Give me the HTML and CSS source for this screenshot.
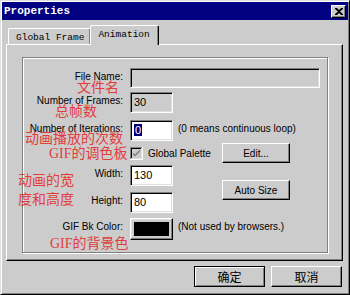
FILE: index.html
```html
<!DOCTYPE html>
<html lang="zh-CN">
<head>
  <meta charset="UTF-8">
  <title>Properties</title>
  <link rel="stylesheet" href="styles.css">
</head>
<body>
  <div class="window">
    <div class="titlebar">
      <span class="title">Properties</span>
      <span class="close">
        <svg width="8" height="7" viewBox="0 0 8 7"><path d="M0 0h2l2 2 2-2h2v1L5 3.5 8 6v1H6L4 5 2 7H0V6l3-2.5L0 1z" fill="#000"/></svg>
      </span>
    </div>
    <div class="main">
      <div class="tabs">
        <div class="tab">Global Frame</div>
        <div class="tab active">Animation</div>
      </div>
      <div class="panel">
        <div class="group">
          <div class="label">File Name:</div>
          <div class="field wide off"></div>

          <div class="label">Number of Frames:</div>
          <div class="field off frames">30</div>

          <div class="label">Number of Iterations:</div>
          <div class="field"><span class="sel">0</span></div>
          <div class="note">(0 means continuous loop)</div>

          <div class="check-row">
            <span class="check">
              <svg width="13" height="13" viewBox="0 0 13 13">
                <path d="M0 0h12v1H1v11H0z" fill="#808080"/>
                <path d="M1 1h10v1H2v9H1z" fill="#000"/>
                <path d="M12 0h1v13H0v-1h12z" fill="#fff"/>
                <path d="M11 1h1v11H1v-1h10z" fill="#dfdfdf"/>
                <path d="M3 5.5l2 2 5-5v2l-5 5-2-2z" fill="#808080"/>
              </svg>
            </span>
            <span class="check-text">Global Palette</span>
            <span class="btn small">Edit...</span>
          </div>

          <div class="label">Width:</div>
          <div class="field">130</div>
          <div class="autosize"><span class="btn small">Auto Size</span></div>

          <div class="label">Height:</div>
          <div class="field">80</div>

          <div class="label">GIF Bk Color:</div>
          <div class="swatch"><span class="swatch-fill"></span></div>
          <div class="note">(Not used by browsers.)</div>

          <div class="tip tip-name">文件名</div>
          <div class="tip tip-frames">总帧数</div>
          <div class="tip tip-loop">动画播放的次数</div>
          <div class="tip tip-palette">GIF的调色板</div>
          <div class="tip tip-size">动画的宽<br>度和高度</div>
          <div class="tip tip-bg">GIF的背景色</div>
        </div>
      </div>
      <div class="actions">
        <span class="btn big default">确定</span>
        <span class="btn big">取消</span>
      </div>
    </div>
  </div>
</body>
</html>
```

FILE: styles.css
```css
body {
  margin: 0;
  background: #cccccc;
}
.window {
  width: 350px;
  height: 295px;
  box-sizing: border-box;
  background: #cccccc;
  border: 1px solid;
  border-color: #dfdfdf #000 #000 #dfdfdf;
  box-shadow: inset 1px 1px #fff, inset -1px -1px #808080;
  padding: 1px;
}
.titlebar {
  height: 18px;
  background: #000080;
  color: #fff;
  display: flex;
  align-items: center;
  justify-content: space-between;
  padding-left: 2px;
}
.title {
  font-family: "Liberation Mono", monospace;
  font-weight: bold;
  font-size: 11px;
}
.close {
  width: 15px;
  height: 13px;
  box-sizing: border-box;
  margin-right: 2px;
  background: #cccccc;
  border: 1px solid;
  border-color: #fff #000 #000 #fff;
  box-shadow: inset -1px -1px #808080;
  display: flex;
  align-items: center;
  justify-content: center;
}
.main {
  padding: 5px 5px 0 4px;
}
.tabs {
  display: flex;
  align-items: flex-end;
  height: 19px;
  padding-left: 2px;
  font-family: "Liberation Mono", monospace;
  font-size: 9.5px;
  color: #000;
}
.tab {
  height: 16px;
  box-sizing: border-box;
  padding: 3px 6px 0 7px;
  border: 1px solid;
  border-bottom: none;
  border-color: #fff #000 #000 #fff;
  box-shadow: inset -1px 0 #808080;
  border-radius: 2px 2px 0 0;
  background: #cccccc;
}
.tab.active {
  position: relative;
  height: 20px;
  margin: 0 0 -1px -1px;
  padding: 3px 8px 0 7px;
  z-index: 1;
}
.panel {
  height: 217px;
  box-sizing: border-box;
  border: 1px solid;
  border-color: #fff #000 #000 #fff;
  box-shadow: inset -1px -1px #808080;
  padding: 12px 14px 0 15px;
}
.group {
  position: relative;
  height: 196px;
  box-sizing: border-box;
  border: 1px solid #808080;
  box-shadow: inset 1px 1px #fff, 1px 1px #fff;
  padding-top: 10px;
  display: grid;
  grid-template-columns: 107px 48px 1fr;
  grid-template-rows: 24px 28px 23px 22px 27px 26px 22px;
  align-items: start;
  font-family: "Liberation Sans", Arial, sans-serif;
  font-size: 10px;
  color: #000;
}
.label {
  grid-column: 1;
  text-align: right;
  padding-right: 7px;
  line-height: 18px;
}
.field {
  width: 43px;
  height: 21px;
  box-sizing: border-box;
  border: 1px solid;
  border-color: #808080 #fff #fff #808080;
  box-shadow: inset 1px 1px #000, inset -1px -1px #dfdfdf;
  background: #fff;
  padding: 0 3px;
  line-height: 19px;
  font-size: 11px;
}
.field.wide {
  grid-column: 2 / 4;
  width: 190px;
  height: 20px;
}
.field.off {
  background: #cccccc;
}
.sel {
  background: #000080;
  color: #fff;
  padding: 0 1px;
}
.note {
  line-height: 18px;
  white-space: nowrap;
}
.check-row {
  grid-column: 2 / 4;
  display: flex;
  align-items: center;
  height: 20px;
}
.check {
  display: flex;
  width: 13px;
  height: 13px;
}
.check-text {
  margin-left: 5px;
  width: 74px;
}
.btn {
  box-sizing: border-box;
  display: flex;
  align-items: center;
  justify-content: center;
  background: #cccccc;
  border: 1px solid;
  border-color: #fff #000 #000 #fff;
  box-shadow: inset -1px -1px #808080;
  color: #000;
}
.btn.small {
  width: 68px;
  height: 20px;
  font-size: 10px;
}
.autosize {
  grid-row: 5 / 7;
  grid-column: 3;
  padding: 15px 0 0 44px;
}
.swatch {
  width: 43px;
  height: 22px;
  box-sizing: border-box;
  border: 1px solid;
  border-color: #fff #000 #000 #fff;
  box-shadow: inset -1px -1px #808080, inset 1px 1px #dfdfdf;
  padding: 3px;
}
.swatch-fill {
  display: block;
  height: 100%;
  background: #000;
}
.tip {
  position: absolute;
  font-family: "Liberation Serif", "Noto Sans CJK SC", serif;
  font-size: 14px;
  line-height: 14px;
  color: #e23c3c;
  white-space: nowrap;
}
.tip-name { left: 54px; top: 23px; }
.tip-frames { left: 32px; top: 47px; }
.tip-loop { left: 2px; top: 74px; }
.tip-palette { left: 26px; top: 89px; }
.tip-size { left: -5px; top: 113px; line-height: 19px; }
.tip-bg { left: 27px; top: 179px; }
.actions {
  display: flex;
  justify-content: flex-end;
  gap: 6px;
  margin-top: 5px;
  padding-right: 1px;
}
.btn.big {
  width: 71px;
  height: 21px;
  font-family: "Noto Sans CJK SC", sans-serif;
  font-size: 12px;
}
.btn.default {
  border-color: #000;
  box-shadow: inset 1px 1px #fff, inset -1px -1px #808080;
}
```
